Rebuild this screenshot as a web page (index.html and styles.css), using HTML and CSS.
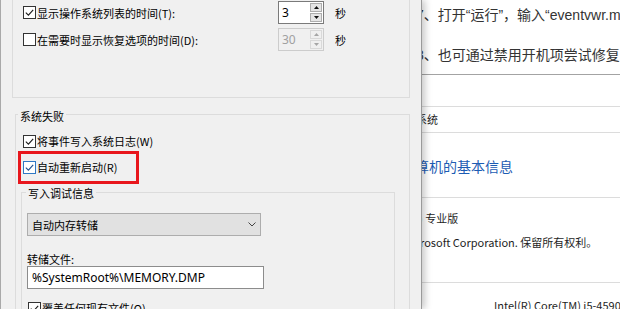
FILE: index.html
```html
<!DOCTYPE html>
<html lang="zh-CN">
<head>
<meta charset="utf-8">
<title>启动和故障恢复</title>
<link rel="stylesheet" href="styles.css">
</head>
<body>
<div class="desk">
  <div class="page">
    <div class="art">7、打开“运行”，输入“eventvwr.msc”</div>
    <div class="art art2">8、也可通过禁用开机项尝试修复</div>
    <div class="rule dark"></div>
    <div class="rule r2"></div>
    <div class="crumb">系统</div>
    <div class="rule"></div>
    <div class="heading">算机的基本信息</div>
    <div class="rule"></div>
    <div class="info info1">) 专业版</div>
    <div class="info info2">rosoft Corporation. 保留所有权利。</div>
    <div class="rule r5"></div>
    <div class="info cpu">Intel(R) Core(TM) i5-4590 CPU @ 3.30GHz</div>
  </div>

  <div class="dialog">
    <div class="group g1">
      <div class="srow">
        <div class="chk">
          <span class="box"><svg width="11" height="11" viewBox="0 0 11 11"><path d="M1.8 5.6 L4.4 8.2 L9.2 2.8" fill="none" stroke="#1a1a1a" stroke-width="1.1"/></svg></span>
          <span class="txt">显示操作系统列表的时间(T):</span>
        </div>
        <div class="spin">
          <span class="val">3</span>
          <span class="btns">
            <span class="btn"><svg width="5" height="3" viewBox="0 0 5 3"><polygon points="2.5,0 5,3 0,3" fill="#111"/></svg></span>
            <span class="btn"><svg width="5" height="3" viewBox="0 0 5 3"><polygon points="0,0 5,0 2.5,3" fill="#111"/></svg></span>
          </span>
        </div>
        <span class="unit">秒</span>
      </div>
      <div class="srow srow2">
        <div class="chk">
          <span class="box"></span>
          <span class="txt">在需要时显示恢复选项的时间(D):</span>
        </div>
        <div class="spin dis">
          <span class="val">30</span>
          <span class="btns">
            <span class="btn"><svg width="5" height="3" viewBox="0 0 5 3"><polygon points="2.5,0 5,3 0,3" fill="#a6a6a6"/></svg></span>
            <span class="btn"><svg width="5" height="3" viewBox="0 0 5 3"><polygon points="0,0 5,0 2.5,3" fill="#a6a6a6"/></svg></span>
          </span>
        </div>
        <span class="unit">秒</span>
      </div>
    </div>

    <div class="group g2">
      <div class="gtitle">系统失败</div>
      <div class="chk crow c1">
        <span class="box"><svg width="11" height="11" viewBox="0 0 11 11"><path d="M1.8 5.6 L4.4 8.2 L9.2 2.8" fill="none" stroke="#1a1a1a" stroke-width="1.1"/></svg></span>
        <span class="txt">将事件写入系统日志(W)</span>
      </div>
      <div class="chk crow c2">
        <span class="box hot"><svg width="11" height="11" viewBox="0 0 11 11"><path d="M1.8 5.6 L4.4 8.2 L9.2 2.8" fill="none" stroke="#1f4f8f" stroke-width="1.1"/></svg></span>
        <span class="txt">自动重新启动(R)</span>
        <span class="highlight"></span>
      </div>

      <div class="group g3">
        <div class="gtitle">写入调试信息</div>
        <div class="select">
          <span>自动内存转储</span>
          <svg width="8" height="5" viewBox="0 0 8 5"><polyline points="0.5,0.5 4,4 7.5,0.5" fill="none" stroke="#444" stroke-width="1"/></svg>
        </div>
        <div class="flabel">转储文件:</div>
        <div class="field">%SystemRoot%\MEMORY.DMP</div>
        <div class="chk crow c3">
          <span class="box"><svg width="11" height="11" viewBox="0 0 11 11"><path d="M1.8 5.6 L4.4 8.2 L9.2 2.8" fill="none" stroke="#1a1a1a" stroke-width="1.1"/></svg></span>
          <span class="txt">覆盖任何现有文件(O)</span>
        </div>
      </div>
    </div>
  </div>
</div>
</body>
</html>
```

FILE: styles.css
```css
* { box-sizing: border-box; }
html, body { margin: 0; padding: 0; }
body {
  width: 620px;
  height: 309px;
  overflow: hidden;
  font-family: "Noto Sans CJK SC", "Noto Sans", sans-serif;
  background: #fff;
}
.desk {
  position: relative;
  width: 620px;
  height: 309px;
  overflow: hidden;
  background: #fff;
}

/* background window */
.art {
  height: 30px;
  line-height: 30px;
  font-family: "Liberation Sans", "Noto Sans CJK SC", sans-serif;
  font-size: 14px;
  color: #333;
  padding-left: 416px;
  white-space: nowrap;
}
.art2 { margin-top: 10px; }
.rule { height: 1px; background: #dcdcdc; }
.rule.dark { background: #a3a3a3; margin-top: 4px; }
.r2 { margin-top: 31px; }
.crumb {
  height: 25px;
  line-height: 25px;
  font-size: 11px;
  padding-left: 416px;
  color: #1e1e1e;
}
.heading {
  height: 64px;
  padding-top: 23px;
  line-height: 20px;
  font-size: 14px;
  color: #1d5cb3;
  padding-left: 415px;
  white-space: nowrap;
}
.info {
  line-height: 20px;
  font-size: 11px;
  white-space: nowrap;
  color: #1e1e1e;
}
.info1 { margin-top: 10px; padding-left: 419px; }
.info2 { margin-top: 4px; padding-left: 420px; }
.r5 { margin-top: 30px; }
.cpu { margin-top: 12px; padding-left: 494px; }

/* dialog */
.dialog {
  position: absolute;
  left: 0;
  top: 0;
  width: 422px;
  height: 309px;
  background: #f0f0f0;
  border-left: 1px solid #a9a9a9;
  border-right: 1px solid #9a9a9a;
  box-shadow: 3px 0 7px rgba(0, 0, 0, 0.22);
  font-size: 11px;
  color: #000;
  overflow: hidden;
}
.group { border: 1px solid #dcdcdc; }
.gtitle {
  width: fit-content;
  padding: 0 2px;
  line-height: 14px;
  background: #f0f0f0;
  white-space: nowrap;
}

.g1 {
  margin-top: -10px;
  margin-left: 11px;
  width: 398px;
  height: 108px;
  padding: 10px 0 0 10px;
}
.srow {
  display: flex;
  align-items: center;
  height: 23px;
}
.srow2 { margin-top: 4px; }
.srow .chk { width: 255px; }

.chk {
  display: flex;
  align-items: center;
  white-space: nowrap;
}
.box {
  width: 13px;
  height: 13px;
  flex: none;
  border: 1px solid #333;
  background: #fff;
  display: flex;
}
.box.hot { border-color: #2f78c4; }
.txt { margin-left: 1px; line-height: 14px; }

.spin {
  width: 46px;
  height: 23px;
  display: flex;
  border: 1px solid #7a7a7a;
  background: #fff;
}
.val {
  flex: 1;
  padding-left: 3px;
  font-family: "Noto Sans", sans-serif;
  font-size: 12px;
  line-height: 21px;
  color: #000;
}
.btns {
  width: 13px;
  display: flex;
  flex-direction: column;
  padding: 1px 1px 1px 0;
  gap: 1px;
}
.btn {
  flex: 1;
  background: #e5e5e5;
  border: 1px solid #adadad;
  display: flex;
  align-items: center;
  justify-content: center;
}
.spin.dis { border-color: #cccccc; background: #f0f0f0; }
.spin.dis .val { color: #a0a0a0; }
.spin.dis .btn { background: #f0f0f0; border-color: #d9d9d9; }
.unit { margin-left: 11px; }

.g2 {
  margin-top: 16px;
  margin-left: 14px;
  width: 395px;
  height: 230px;
  border-bottom: none;
}
.g2 > .gtitle { margin-top: -6px; margin-left: 2px; }
.crow { height: 20px; margin-left: 7px; }
.c1 { margin-top: 8px; }
.c2 { margin-top: 6px; position: relative; width: fit-content; }
.highlight {
  position: absolute;
  left: -5px;
  top: -6px;
  width: 121px;
  height: 33px;
  border: 3px solid #e8161c;
}

.g3 {
  margin-top: 15px;
  margin-left: 5px;
  width: 374px;
  height: 140px;
  border-bottom: none;
}
.g3 > .gtitle { margin-top: -7px; margin-left: 4px; }
.select {
  margin-left: 5px;
  margin-top: 13px;
  width: 234px;
  height: 23px;
  background: #e1e1e1;
  border: 1px solid #adadad;
  padding: 0 4px 0 4px;
  display: flex;
  align-items: center;
  justify-content: space-between;
}
.flabel {
  margin-left: 5px;
  margin-top: 16px;
  line-height: 14px;
}
.field {
  margin-left: 5px;
  width: 237px;
  height: 23px;
  background: #fff;
  border: 1px solid #8c8c8c;
  padding-left: 4px;
  font-family: "Noto Sans", sans-serif;
  font-size: 12px;
  line-height: 21px;
  white-space: nowrap;
}
.c3 { margin-left: 6px; margin-top: 9px; }
```
